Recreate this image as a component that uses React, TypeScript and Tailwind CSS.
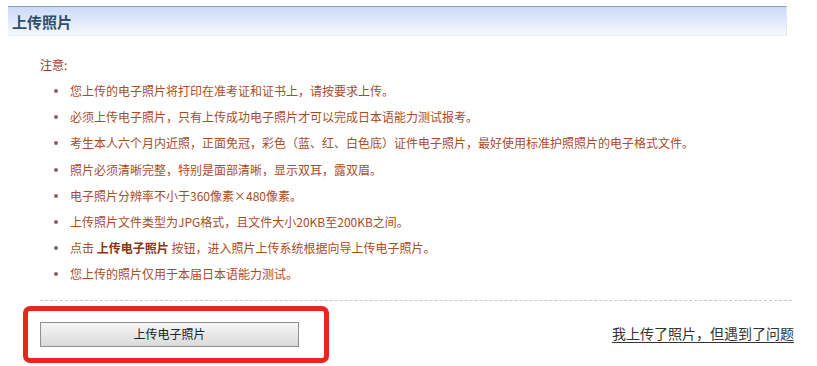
import React from "react";

const items: React.ReactNode[] = [
  "您上传的电子照片将打印在准考证和证书上，请按要求上传。",
  "必须上传电子照片，只有上传成功电子照片才可以完成日本语能力测试报考。",
  "考生本人六个月内近照，正面免冠，彩色（蓝、红、白色底）证件电子照片，最好使用标准护照照片的电子格式文件。",
  "照片必须清晰完整，特别是面部清晰，显示双耳，露双眉。",
  "电子照片分辨率不小于360像素×480像素。",
  "上传照片文件类型为JPG格式，且文件大小20KB至200KB之间。",
  <>
    点击 <b className="font-bold text-[#8a3414]">上传电子照片</b> 按钮，进入照片上传系统根据向导上传电子照片。
  </>,
  "您上传的照片仅用于本届日本语能力测试。",
];

export default function App() {
  return (
    <div className="w-[817px] h-[366px] bg-white overflow-hidden font-['Noto_Sans_CJK_SC','Noto_Sans',sans-serif]">
      <div className="pt-[6px] pl-[8px] w-[787px]">
        <div className="h-[30px] border-t border-[#8aa0b8] border-b border-b-[#e6eaf2] border-r border-r-[#e4e7ee] bg-gradient-to-b from-[#cbdaf7] to-[#f6f8fd] flex items-center pl-[4px]">
          <span className="text-[15px] font-bold text-[#2d4f70] leading-none">上传照片</span>
        </div>
      </div>

      <div className="mt-[16px] pl-[40px] text-[12px] text-[#aa4c1f]">
        <div className="h-[26px] flex items-center text-[#93391a]">注意:</div>
        <ul>
          {items.map((t, i) => (
            <li key={i} className="h-[26.2px] flex items-center">
              <span className="ml-[14px] w-[4px] h-[4px] rounded-full bg-[#7e6a60] shrink-0" />
              <span className="ml-[12px] whitespace-nowrap">{t}</span>
            </li>
          ))}
        </ul>
      </div>

      <div className="mt-[12px] ml-[40px] w-[752px] border-t border-dashed border-[#c9c9c9]" />

      <div className="flex mt-[5px]">
        <div className="ml-[23px] w-[306px] h-[57px] border-[5px] border-[#e8261c] rounded-[7px] pl-[12px] pt-[11px]">
          <button className="w-[259px] h-[25px] border border-[#8f8f8f] bg-gradient-to-b from-[#f6f6f6] to-[#dadada] text-[12px] text-[#222] flex items-center justify-center">
            上传电子照片
          </button>
        </div>
        <a className="ml-auto mr-[23px] mt-[17px] h-[20px] text-[14px] leading-[20px] text-[#333] underline underline-offset-[3px] whitespace-nowrap">
          我上传了照片，但遇到了问题
        </a>
      </div>
    </div>
  );
}
